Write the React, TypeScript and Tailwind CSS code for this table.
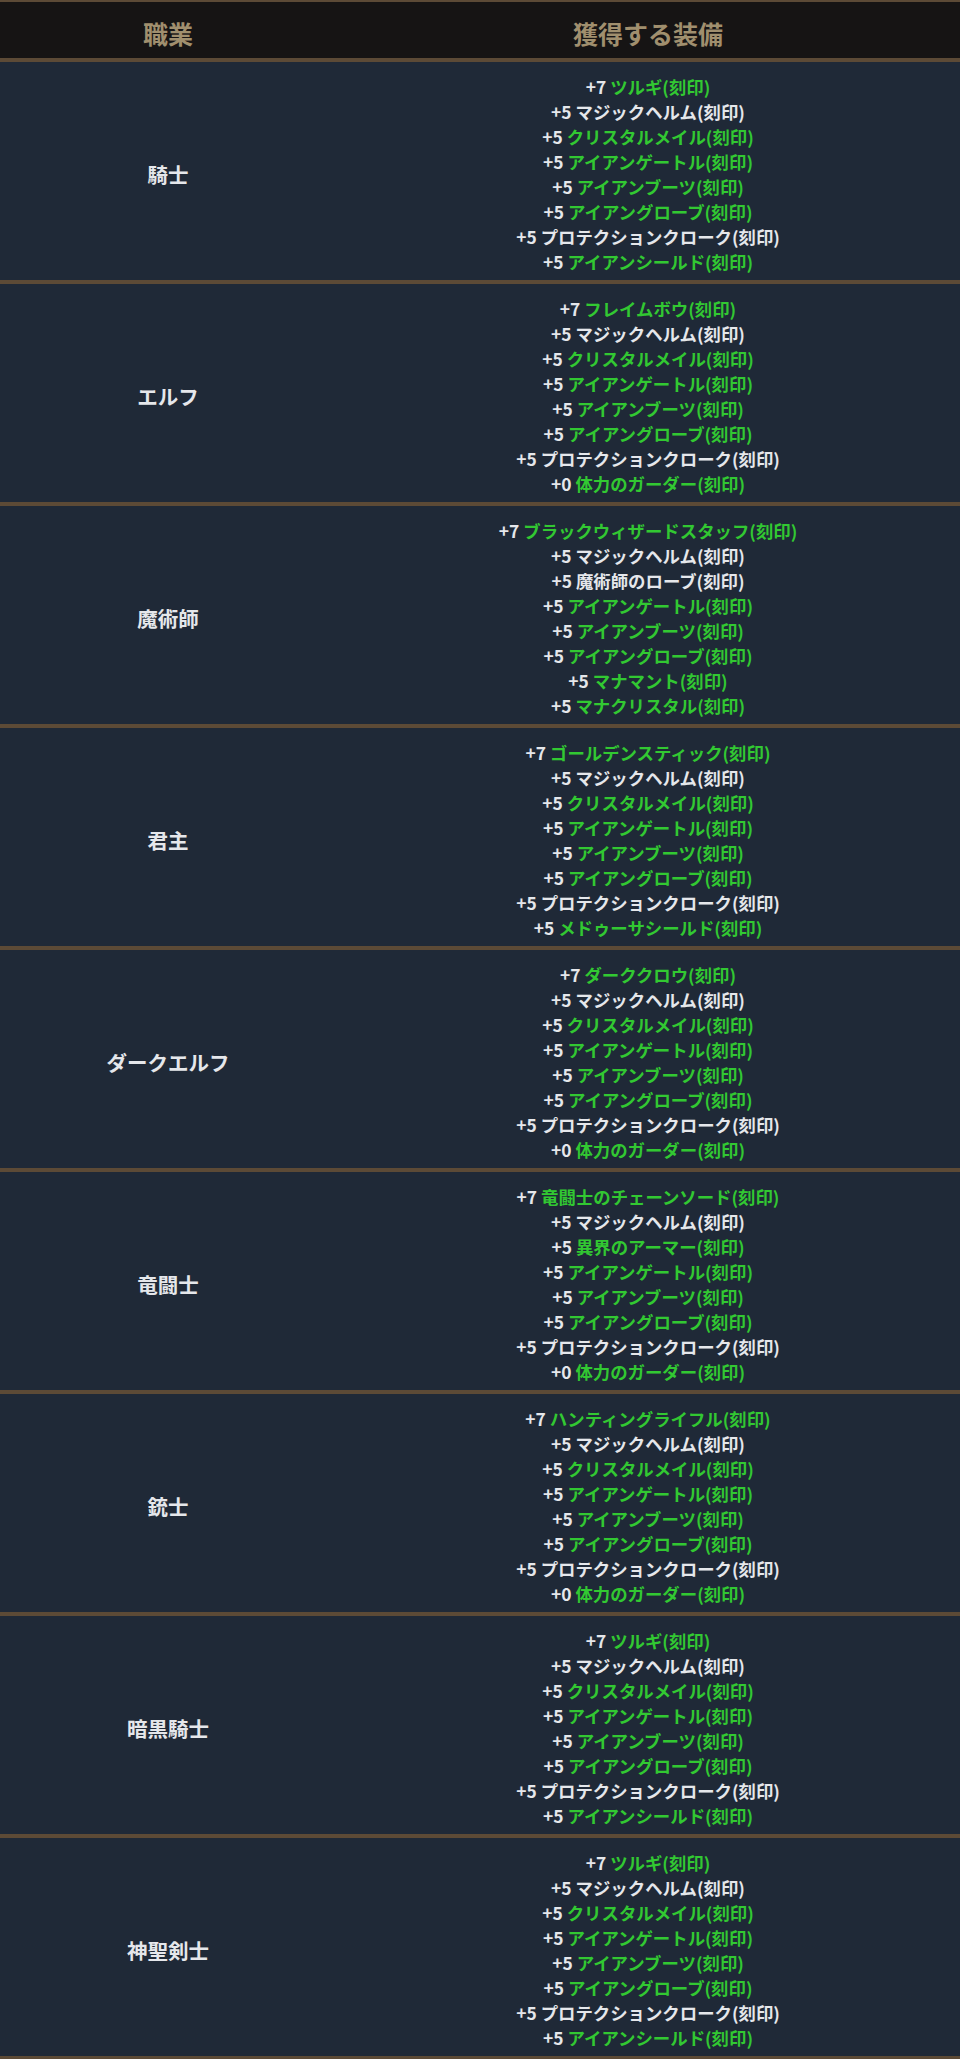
const W = "white";
const G = "green";

type Item = [string, string, typeof W | typeof G];

const base: Item[] = [
  ["+5", "マジックヘルム(刻印)", W],
  ["+5", "クリスタルメイル(刻印)", G],
  ["+5", "アイアンゲートル(刻印)", G],
  ["+5", "アイアンブーツ(刻印)", G],
  ["+5", "アイアングローブ(刻印)", G],
  ["+5", "プロテクションクローク(刻印)", W],
];

const shield: Item = ["+5", "アイアンシールド(刻印)", G];
const garter: Item = ["+0", "体力のガーダー(刻印)", G];

const rows: { job: string; items: Item[] }[] = [
  { job: "騎士", items: [["+7", "ツルギ(刻印)", G], ...base, shield] },
  { job: "エルフ", items: [["+7", "フレイムボウ(刻印)", G], ...base, garter] },
  {
    job: "魔術師",
    items: [
      ["+7", "ブラックウィザードスタッフ(刻印)", G],
      ["+5", "マジックヘルム(刻印)", W],
      ["+5", "魔術師のローブ(刻印)", W],
      ["+5", "アイアンゲートル(刻印)", G],
      ["+5", "アイアンブーツ(刻印)", G],
      ["+5", "アイアングローブ(刻印)", G],
      ["+5", "マナマント(刻印)", G],
      ["+5", "マナクリスタル(刻印)", G],
    ],
  },
  {
    job: "君主",
    items: [["+7", "ゴールデンスティック(刻印)", G], ...base, ["+5", "メドゥーサシールド(刻印)", G]],
  },
  { job: "ダークエルフ", items: [["+7", "ダーククロウ(刻印)", G], ...base, garter] },
  {
    job: "竜闘士",
    items: [
      ["+7", "竜闘士のチェーンソード(刻印)", G],
      ["+5", "マジックヘルム(刻印)", W],
      ["+5", "異界のアーマー(刻印)", G],
      ["+5", "アイアンゲートル(刻印)", G],
      ["+5", "アイアンブーツ(刻印)", G],
      ["+5", "アイアングローブ(刻印)", G],
      ["+5", "プロテクションクローク(刻印)", W],
      garter,
    ],
  },
  { job: "銃士", items: [["+7", "ハンティングライフル(刻印)", G], ...base, garter] },
  { job: "暗黒騎士", items: [["+7", "ツルギ(刻印)", G], ...base, shield] },
  { job: "神聖剣士", items: [["+7", "ツルギ(刻印)", G], ...base, shield] },
];

export default function App() {
  return (
    <div
      className="w-[960px] bg-[#1f2937] text-[#e5e7eb]"
      style={{ fontFamily: '"Noto Sans CJK JP", "Noto Sans", sans-serif' }}
    >
      {/* Header */}
      <div className="flex h-[62px] pt-[8px] border-t-[2px] border-b-4 border-[#5c4a36] bg-[#161414] font-bold text-[25px] text-[#a08f6e]">
        <div className="w-[336px] flex items-center justify-center">職業</div>
        <div className="flex-1 flex items-center justify-center">獲得する装備</div>
      </div>

      {rows.map((r) => (
        <div key={r.job + r.items[0][1]} className="flex border-b-4 border-[#5c4a36]">
          <div className="w-[336px] flex items-center justify-center pt-[7px] font-bold text-[20.5px]">
            {r.job}
          </div>
          <div className="flex-1 flex flex-col items-center pt-[12px] pb-[6px] font-bold text-[17.4px] leading-[25px]">
            {r.items.map((it, i) => (
              <div key={i}>
                {it[0]}{" "}
                <span className={it[2] === G ? "text-[#32c832]" : ""}>{it[1]}</span>
              </div>
            ))}
          </div>
        </div>
      ))}
    </div>
  );
}
